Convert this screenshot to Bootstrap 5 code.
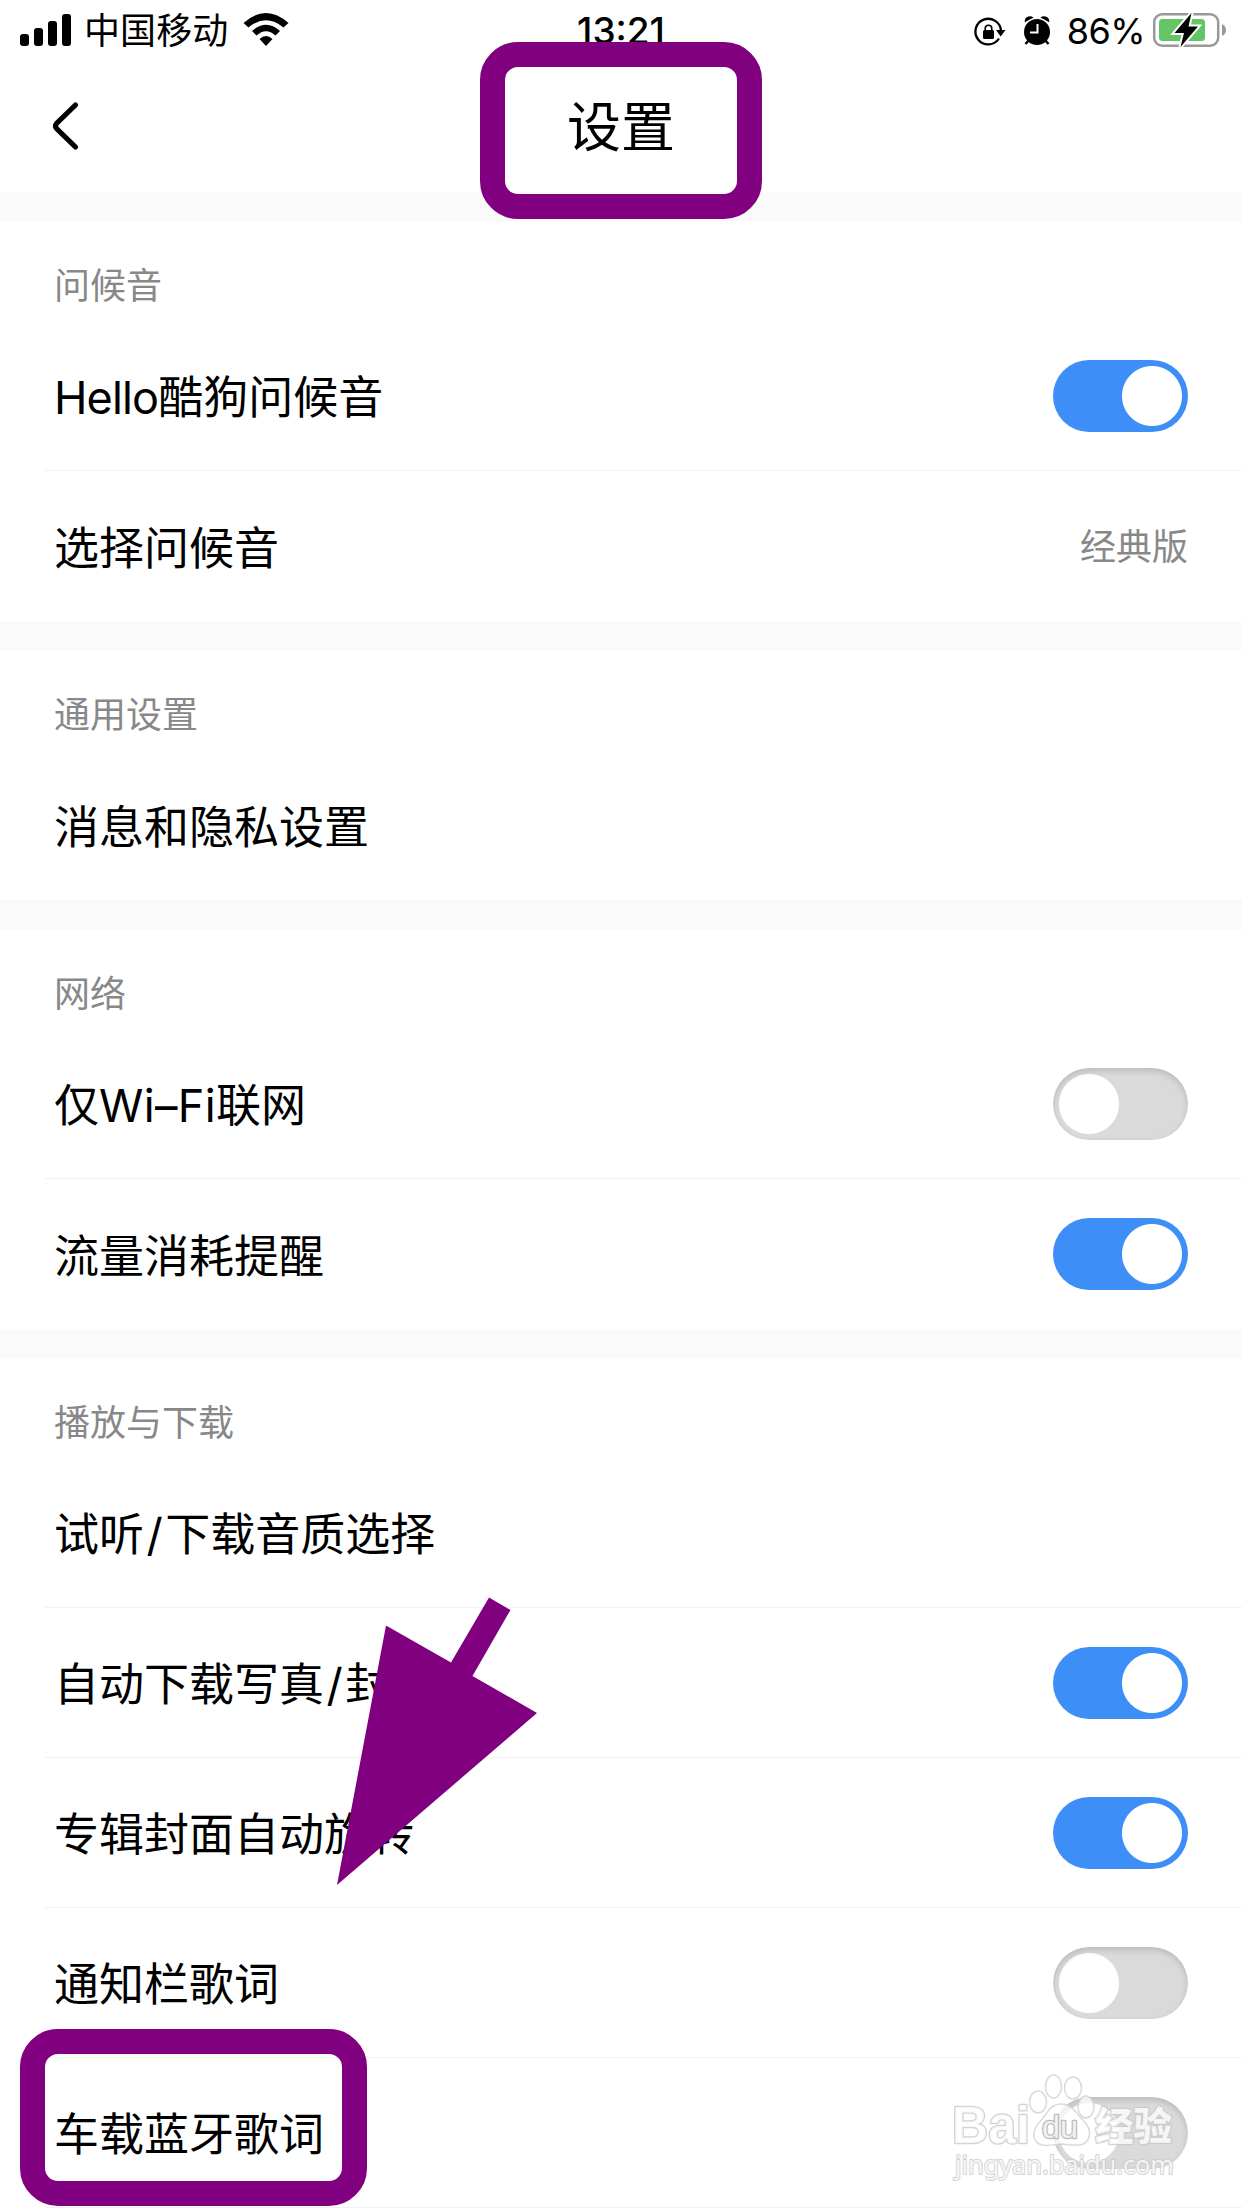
<!DOCTYPE html>
<html lang="zh-CN">
<head>
<meta charset="utf-8">
<meta name="viewport" content="width=device-width, initial-scale=1">
<title>设置</title>
<link href="https://cdn.jsdelivr.net/npm/bootstrap@5.3.0/dist/css/bootstrap.min.css" rel="stylesheet">
<style>
body{font-family:Inter,"Noto Sans CJK SC",sans-serif;color:#000;background:#fff}
.phone{width:1242px;height:2208px;background:#fafafa}
.status{height:60px;padding:0 16px 16px 20px;font-size:36px;line-height:44px;background:#fff}
.status svg,.appbar svg{display:block;flex:none;overflow:visible}
.carrier{margin-left:13px;margin-right:14px;padding-top:18px;letter-spacing:.1px}
.clock{font-weight:500;font-size:37px;letter-spacing:0;padding-top:17px;margin-right:4px}
.percent{letter-spacing:-.6px;margin:0 7px 0 15px;padding-top:17px}
.appbar{height:132px;background:#fff}
.appbar h1{font-size:54px;line-height:60px;font-weight:400;padding-top:4px}
.back-btn{width:140px;height:132px;padding:0 0 0 48px;border:0}
.group{background:#fff;margin-top:30px}
.group-title{height:99px;padding:35px 54px 0;font-size:36px;line-height:58px;color:#888;font-weight:400}
.setting{height:150px;padding:0 54px 0 9px;margin-left:45px;font-size:45px;line-height:60px}
.setting.ruled{border-bottom:1px solid #f2f2f2}
.setting-name{padding-top:5px}
.setting-value{font-size:36px;color:#888;padding-top:2px}
.slash{padding:0 2.500px}
.toggle.form-check-input{width:135px;height:72px;margin:0;border:0;border-radius:36px;background:radial-gradient(circle at 36px 36px,#fff 29.5px,transparent 30.5px) #dadada;box-shadow:inset 0 3px 6px rgba(0,0,0,.15)}
.toggle.form-check-input:checked{background:radial-gradient(circle at 99px 36px,#fff 29.5px,transparent 30.5px) #3e8ef7;box-shadow:none}
.frame{position:absolute;border:25px solid purple;border-radius:38px;height:177px}
.frame-title{left:480px;top:42px;width:282px}
.frame-row{left:20px;top:2029px;width:347px}
.pointer{position:absolute;left:337px;top:1597px}
.stamp{position:absolute;left:950px;top:2070px}
</style>
<script src="https://cdn.jsdelivr.net/npm/bootstrap@5.3.0/dist/js/bootstrap.bundle.min.js"></script>
</head>
<body>
<div class="phone position-relative overflow-hidden">
  <div class="status d-flex align-items-center">
    <div class="d-flex align-items-center flex-grow-1" style="flex-basis:0">
      <svg width="51" height="44" viewBox="0 0 51 44"><rect y="34" width="9" height="12" rx="3"/><rect x="14" y="28" width="9" height="18" rx="3"/><rect x="28" y="21" width="9" height="25" rx="3"/><rect x="42" y="14" width="9" height="32" rx="3"/></svg>
      <span class="carrier">中国移动</span>
      <svg width="48" height="44" viewBox="242 0 48 44"><path d="M243.500 23Q266 3 288.500 23L283.500 27.500Q266 13 248.500 27.500ZM252 31Q266 18.500 280 31L275.500 35.500Q266 27 256.500 35.500ZM259.500 39Q266 33 272.500 39L266 46Z"/></svg>
    </div>
    <div class="clock">13:21</div>
    <div class="d-flex align-items-center justify-content-end flex-grow-1" style="flex-basis:0">
      <svg width="78" height="44" viewBox="975 0 78 44"><path d="M1000 38.500A12.800 12.800 0 1 1 1002 31" fill="none" stroke="#000" stroke-width="2.300"/><path d="M997 30h9.500l-4.800 6.500z"/><rect x="984" y="30" width="11" height="9" rx="1.500"/><path d="M986.200 31v-2.500a3.300 3.300 0 0 1 6.600 0V31" fill="none" stroke="#000" stroke-width="1.600"/><circle cx="1038" cy="32" r="13"/><path d="M1026.500 21q0-4 5.500-4l1 .500zM1049.500 21q0-4-5.500-4l-1 .500z" stroke="#000" stroke-width="1.500"/><path d="M1030 40l-3.500 4M1046 40l3.500 4" stroke="#000" stroke-width="2.500"/><path d="M1038.500 24v8.500H1031" fill="none" stroke="#fff" stroke-width="2"/></svg>
      <span class="percent">86%</span>
      <svg width="74" height="44" viewBox="1152 0 74 44"><rect x="1154.200" y="14.200" width="64" height="31.600" rx="8" fill="none" stroke="#999" stroke-width="2.500"/><rect x="1159" y="19" width="46" height="22" rx="3.500" fill="#65c466"/><path d="M1222 24q4 2 4 6t-4 6z" fill="#999"/><path d="M1191.500 13L1174.500 33H1184L1180.500 47L1198 26.500H1188.500Z" stroke="#fff" stroke-width="4" paint-order="stroke"/></svg>
    </div>
  </div>
  <nav class="appbar d-flex align-items-center">
    <button class="btn back-btn text-start" type="button" aria-label="返回"><svg width="30" height="50" viewBox="0 0 30 50"><path d="M27.500 4L8.500 22.500Q6.500 25 8.500 27.500L27.500 46" fill="none" stroke="#000" stroke-width="5.200" stroke-linecap="round"/></svg></button>
    <h1 class="m-0 flex-grow-1 text-center">设置</h1>
    <div style="width:140px"></div>
  </nav>

  <section class="group">
    <h2 class="group-title m-0">问候音</h2>
    <div class="setting ruled d-flex align-items-center justify-content-between"><span class="setting-name"><span style="letter-spacing:-.850px">Hello</span>酷狗问候音</span><input class="form-check-input toggle" type="checkbox" role="switch" checked></div>
    <div class="setting d-flex align-items-center justify-content-between"><span class="setting-name">选择问候音</span><span class="setting-value">经典版</span></div>
  </section>
  <section class="group">
    <h2 class="group-title m-0">通用设置</h2>
    <div class="setting d-flex align-items-center"><span class="setting-name">消息和隐私设置</span></div>
  </section>
  <section class="group">
    <h2 class="group-title m-0">网络</h2>
    <div class="setting ruled d-flex align-items-center justify-content-between"><span class="setting-name">仅<span style="letter-spacing:.350px">Wi–Fi</span>联网</span><input class="form-check-input toggle" type="checkbox" role="switch"></div>
    <div class="setting d-flex align-items-center justify-content-between"><span class="setting-name">流量消耗提醒</span><input class="form-check-input toggle" type="checkbox" role="switch" checked></div>
  </section>
  <section class="group">
    <h2 class="group-title m-0">播放与下载</h2>
    <div class="setting ruled d-flex align-items-center"><span class="setting-name">试听<span class="slash">/</span>下载音质选择</span></div>
    <div class="setting ruled d-flex align-items-center justify-content-between"><span class="setting-name">自动下载写真<span class="slash">/</span>封面</span><input class="form-check-input toggle" type="checkbox" role="switch" checked></div>
    <div class="setting ruled d-flex align-items-center justify-content-between"><span class="setting-name">专辑封面自动旋转</span><input class="form-check-input toggle" type="checkbox" role="switch" checked></div>
    <div class="setting ruled d-flex align-items-center justify-content-between"><span class="setting-name">通知栏歌词</span><input class="form-check-input toggle" type="checkbox" role="switch"></div>
    <div class="setting ruled d-flex align-items-center justify-content-between"><span class="setting-name">车载蓝牙歌词</span><input class="form-check-input toggle" type="checkbox" role="switch"></div>
  </section>

  <div class="frame frame-title"></div>
  <div class="frame frame-row"></div>
  <svg class="pointer" width="200" height="288" viewBox="337 1597 200 288" fill="purple"><path d="M489 1597.500L510.500 1610L472.500 1676L537 1713L337 1885L386 1625.500L451 1662.500Z"/></svg>
  <svg class="stamp" width="235" height="115" viewBox="950 2070 235 115">
    <g fill="#fff" fill-opacity=".75" stroke="#ccc" stroke-opacity=".75" stroke-width="1.500">
      <ellipse cx="1038" cy="2102" rx="8.500" ry="11"/><ellipse cx="1053.500" cy="2086.500" rx="8" ry="11.500"/><ellipse cx="1073" cy="2088" rx="8.500" ry="11"/><ellipse cx="1086" cy="2107" rx="8" ry="11"/>
      <path d="M1061 2104C1071 2104 1075 2111 1080 2117C1087 2124 1091 2129 1089 2137C1086 2148 1074 2145 1061 2144C1050 2145 1037 2149 1034 2137C1032 2127 1041 2122 1046 2114C1050 2107 1054 2104 1061 2104Z"/>
    </g>
    <g fill="#fff" fill-opacity=".8" stroke="#c8c8c8" stroke-opacity=".8" stroke-width="2.500" paint-order="stroke" stroke-linejoin="round">
      <text x="952" y="2143" font-family="Liberation Sans" font-weight="700" font-size="51" textLength="78" lengthAdjust="spacingAndGlyphs">Bai</text>
      <text x="1042" y="2138" font-family="Liberation Sans" font-size="31" textLength="36" lengthAdjust="spacingAndGlyphs" stroke="#aaa">du</text>
      <text x="1095" y="2140" font-family="Noto Sans CJK SC" font-weight="900" font-size="39" textLength="77" lengthAdjust="spacingAndGlyphs">经验</text>
      <text x="955" y="2174" font-family="Noto Sans" font-size="26" textLength="219" lengthAdjust="spacingAndGlyphs" stroke-width="2">jingyan.baidu.com</text>
    </g>
  </svg>
</div>
</body>
</html>
